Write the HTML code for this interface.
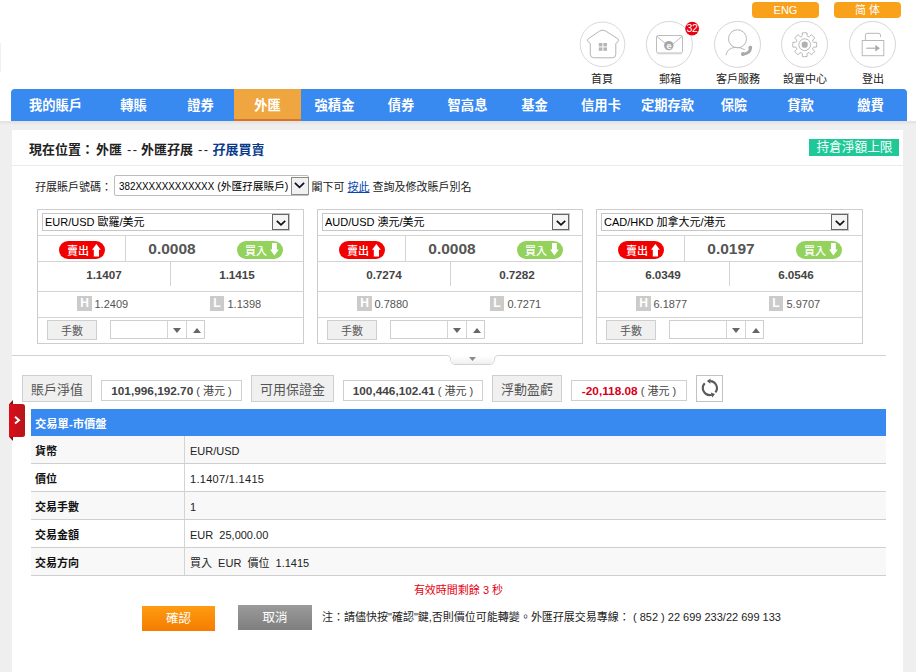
<!DOCTYPE html>
<html lang="zh-Hant">
<head>
<meta charset="utf-8">
<title>外匯孖展買賣</title>
<style>
*{box-sizing:border-box;margin:0;padding:0}
html,body{width:916px;height:672px;overflow:hidden;background:#fff}
body{position:relative;font-family:"Liberation Sans","Noto Sans CJK TC",sans-serif;font-size:12px;color:#222}
.abs{position:absolute}
.t{position:absolute;white-space:nowrap;line-height:1}
/* top */
.lang{position:absolute;top:2px;height:16px;width:67px;background:#f9a11b;border-radius:4px;color:#fff;font-size:11px;line-height:16px;text-align:center}
.ico{position:absolute;top:22px;width:46px;height:46px;border:1px solid #d2d2d2;border-radius:50%;background:#fff}
.icol{position:absolute;top:72px;width:70px;text-align:center;font-size:11px;line-height:14px;color:#222}
/* nav */
#nav{position:absolute;left:11px;top:89px;width:896px;height:32px;background:#3889f0;border-radius:4px 4px 0 0}
#nav div{position:absolute;top:0;height:32px;line-height:33px;text-align:center;color:#fff;font-weight:bold;font-size:13.3px}
#nav .act{background:#f0a640;border-bottom:2px solid #d9722a}
#gray{position:absolute;left:0;top:121px;width:916px;height:551px;background:#efefef}
#shadow{position:absolute;left:0;top:121px;width:916px;height:4px;background:linear-gradient(#e0e0e0,#efefef)}
#main{position:absolute;left:12px;top:130px;width:891px;height:542px;background:#fff}
/* panels */
.panel{position:absolute;top:209px;width:267px;height:135px;border:1px solid #cdcdcd;background:#fff}
.panel .hl{position:absolute;left:0;width:265px;height:1px;background:#d4d4d4}
.panel .vl{position:absolute;width:1px;background:#d4d4d4}
.sel{position:absolute;border:1px solid #c6c6c6;background:#fff;font-size:12px;color:#000;white-space:nowrap}
.sel .arr{position:absolute;right:0;top:0;bottom:0;width:17px;border:1px solid #666;background:#f4f4f4}
.sel .arr svg{position:absolute;left:3px;top:5px}
.tri{position:absolute;width:0;height:0;border-left:4px solid transparent;border-right:4px solid transparent}
.pill{position:absolute;height:18px;width:46px;border-radius:9px;color:#fff;font-size:11px;font-weight:500;line-height:20px;padding-left:8px;white-space:nowrap}
.pill svg{position:absolute;top:3px}
.hlbox{position:absolute;width:15px;height:15px;background:#cbcbcb;color:#fff;font-weight:bold;font-size:12px;line-height:15px;text-align:center}
.btn{position:absolute;border:1px solid #cfcfcf;background:#f0f0f0;color:#555;text-align:center;white-space:nowrap}
.vbox{position:absolute;border:1px solid #cfcfcf;background:#fff;text-align:center;white-space:nowrap;font-size:11px;color:#444}
.vbox b{color:#444;font-size:11.8px}
/* table */
.row{position:absolute;left:31px;width:855px;height:28px;border-bottom:1px solid #cfcfcf;font-size:11px;line-height:31px;overflow:hidden}
.row .k{position:absolute;left:4px;font-weight:bold;color:#111}
.row .v{position:absolute;left:159px;color:#222}
.row .d{position:absolute;left:153px;top:0;width:1px;height:27px;background:#d4d4d4}
.odd{background:#f8f8f8}
</style>
</head>
<body>
<!-- language buttons -->
<div class="lang" style="left:752px">ENG</div>
<div class="lang" style="left:834px">简 体</div>

<!-- icons -->
<svg class="abs" style="left:560px;top:0" width="356" height="90" viewBox="560 0 356 90" fill="none" stroke="#c4c4c4" stroke-width="1">
<!-- circles -->
<circle cx="602.5" cy="44.3" r="22.3" stroke="#dadade"/>
<circle cx="669.4" cy="44.4" r="23" stroke="#d6d6da"/>
<circle cx="737.5" cy="44.4" r="23" stroke="#d6d6da"/>
<circle cx="804.5" cy="44.4" r="23" stroke="#d6d6da"/>
<circle cx="872.5" cy="44.4" r="23" stroke="#d6d6da"/>
<!-- home -->
<path d="M599.6 31 Q602.6 29.2 605.6 31 L617.7 38.7 Q619.7 40.3 617.9 41.8 L615.8 43.5 L615.8 54.3 Q615.8 57.8 612.3 57.8 L593.8 57.8 Q590.3 57.8 590.3 54.3 L590.3 43.5 L588.2 41.8 Q586.4 40.3 588.4 38.7 Z" stroke="#b4b4b4" stroke-linejoin="round"/>
<g fill="#b5b5b5" stroke="none"><rect x="598.8" y="43" width="3.6" height="3.4"/><rect x="603.4" y="43" width="3.6" height="3.4"/><rect x="598.8" y="47.4" width="3.6" height="3.4"/><rect x="603.4" y="47.4" width="3.6" height="3.4"/></g>
<!-- mail -->
<rect x="656.5" y="35.5" width="26" height="17.5" rx="1.5" stroke="#bdbdbd"/>
<path d="M657 36.5 L666 44 M682 36.5 L673 44" stroke="#bdbdbd"/>
<path d="M657.5 53.8 L681.5 53.8" stroke="#d0d0d0"/>
<circle cx="668.8" cy="45.6" r="4.7" fill="#a6a6a6" stroke="none"/>
<text x="669" y="48.6" font-family="Liberation Sans, sans-serif" font-size="9" font-weight="bold" fill="#fff" stroke="none" text-anchor="middle">e</text>
<circle cx="692.1" cy="28.7" r="6.9" fill="#e8000f" stroke="none"/>
<text x="691.9" y="32.4" font-family="Liberation Sans, sans-serif" font-size="10.5" fill="#fff" stroke="none" text-anchor="middle" letter-spacing="-0.4">32</text>
<!-- customer service -->
<circle cx="737.5" cy="38.8" r="9" stroke="#b8b8b8"/>
<path d="M725.9 55.3 Q727.2 48.2 735 47.4 Q740.5 47 744.8 49.8" stroke="#b8b8b8"/>
<path d="M750.4 47.6 Q750.6 53.4 742.8 54.2" stroke="#aaa" stroke-width="3" stroke-linecap="round"/>
<circle cx="750.3" cy="47.7" r="1.9" fill="#aaa" stroke="none"/>
<circle cx="742.9" cy="54" r="1.9" fill="#aaa" stroke="none"/>
<!-- gear -->
<g stroke="#b8b8b8">
<path d="M802.26 35.72 L802.32 32.94 A12.0 12.0 0 0 1 807.08 32.94 L807.14 35.72 A1.6 1.6 0 0 0 809.32 36.63 L811.33 34.70 A12.0 12.0 0 0 1 814.70 38.07 L812.77 40.08 A1.6 1.6 0 0 0 813.68 42.26 L816.46 42.32 A12.0 12.0 0 0 1 816.46 47.08 L813.68 47.14 A1.6 1.6 0 0 0 812.77 49.32 L814.70 51.33 A12.0 12.0 0 0 1 811.33 54.70 L809.32 52.77 A1.6 1.6 0 0 0 807.14 53.68 L807.08 56.46 A12.0 12.0 0 0 1 802.32 56.46 L802.26 53.68 A1.6 1.6 0 0 0 800.08 52.77 L798.07 54.70 A12.0 12.0 0 0 1 794.70 51.33 L796.63 49.32 A1.6 1.6 0 0 0 795.72 47.14 L792.94 47.08 A12.0 12.0 0 0 1 792.94 42.32 L795.72 42.26 A1.6 1.6 0 0 0 796.63 40.08 L794.70 38.07 A12.0 12.0 0 0 1 798.07 34.70 L800.08 36.63 A1.6 1.6 0 0 0 802.26 35.72 Z" stroke-linejoin="round"/>
<circle cx="804.7" cy="44.7" r="5.9"/>
<circle cx="804.7" cy="44.7" r="3.1" fill="#b0b0b0" stroke="none"/>
</g>
<!-- logout -->
<rect x="862.2" y="40.5" width="21.6" height="15.2" stroke="#b8b8b8"/>
<path d="M865.4 40.5 L865.4 35.2 Q865.4 33.3 867.3 33.3 L878.6 33.3 Q880.5 33.3 880.5 35.2 L880.5 37" stroke="#b8b8b8"/>
<path d="M866.2 48.2 L876 48.2" stroke="#aaa" stroke-width="1.1"/>
<path d="M875.3 44.8 L879.9 48.2 L875.3 51.6 Z" fill="#aaa" stroke="none"/>
</svg>
<div class="icol" style="left:567px">首頁</div>
<div class="icol" style="left:635px">郵箱</div>
<div class="icol" style="left:703px">客戶服務</div>
<div class="icol" style="left:770px">設置中心</div>
<div class="icol" style="left:838px">登出</div>

<div class="abs" style="left:0;top:43px;width:1px;height:29px;background:#eef1f5"></div>
<div id="gray"></div>
<div id="shadow"></div>
<!-- nav -->
<div id="nav">
<div style="left:0;width:89px">我的賬戶</div>
<div style="left:89px;width:67px">轉賬</div>
<div style="left:156px;width:67px">證券</div>
<div class="act" style="left:223px;width:67px">外匯</div>
<div style="left:290px;width:67px">強積金</div>
<div style="left:357px;width:66px">債券</div>
<div style="left:423px;width:67px">智高息</div>
<div style="left:490px;width:67px">基金</div>
<div style="left:557px;width:66px">信用卡</div>
<div style="left:623px;width:67px">定期存款</div>
<div style="left:690px;width:66px">保險</div>
<div style="left:756px;width:67px">貸款</div>
<div style="left:823px;width:73px">繳費</div>
</div>

<div id="main"></div>

<!-- breadcrumb -->
<div class="t" style="left:29px;top:143px;font-size:13px;font-weight:bold;color:#222">現在位置：</div><div class="t" style="left:96px;top:143px;font-size:13px;font-weight:bold;color:#222">外匯</div><div class="t" style="left:127px;top:143px;font-size:13px;font-weight:bold;color:#222;font-weight:normal;letter-spacing:1.3px">--</div><div class="t" style="left:141px;top:143px;font-size:13px;font-weight:bold;color:#222">外匯孖展</div><div class="t" style="left:198px;top:143px;font-size:13px;font-weight:bold;color:#222;font-weight:normal;letter-spacing:1.3px">--</div><div class="t" style="left:212.5px;top:143px;font-size:13px;font-weight:bold;color:#222;color:#0a3a8c">孖展買賣</div>
<div class="abs" style="left:809px;top:139px;width:90px;height:17px;background:#1ec997;color:#fff;font-size:12.7px;line-height:17px;text-align:center;white-space:nowrap;padding-left:1px">持倉淨額上限</div>
<div class="abs" style="left:12px;top:165px;width:891px;height:1px;background:#ebebeb"></div>

<!-- account row -->
<div class="t" style="left:35px;top:182px;font-size:11px;color:#222">孖展賬戶號碼：</div>
<div class="sel" style="left:114px;top:175px;width:195px;height:21px;line-height:20px;padding-left:4px;font-size:11px;border-radius:2px;border-color:#bdbdbd"><span style="display:inline-block;transform:scaleX(0.895);transform-origin:0 50%;margin-right:-11.3px">382XXXXXXXXXXXX</span> <span style="font-size:10.7px">(外匯孖展賬戶)</span><span class="arr" style="top:1px;bottom:auto;right:-1px;width:18px;height:18px;border-color:#8a8a8a;background:#f1f1f1"><svg width="11" height="7" viewBox="0 0 11 7" style="left:2px;top:4px"><path d="M0.9 0.9 L5.5 5.3 L10.1 0.9" fill="none" stroke="#10102a" stroke-width="1.8"/></svg></span></div>
<div class="t" style="left:311.5px;top:182px;font-size:11px;color:#222">閣下可 <span style="color:#0645ad;text-decoration:underline">按此</span> 查詢及修改賬戶別名</div>

<div class="panel" style="left:37px">
<div class="sel" style="left:4px;top:3px;width:248px;height:18px;line-height:16px;padding-left:2px;font-size:11px">EUR/USD 歐羅/美元<span class="arr"><svg width="10" height="6" viewBox="0 0 10 6"><path d="M0.8 0.8 L5 4.8 L9.2 0.8" fill="none" stroke="#111" stroke-width="1.7"/></svg></span></div>
<div class="hl" style="top:25px"></div>
<div class="hl" style="top:51px"></div>
<div class="hl" style="top:81px"></div>
<div class="hl" style="top:107px"></div>
<div class="vl" style="left:87px;top:26px;height:25px"></div>
<div class="vl" style="left:132px;top:52px;height:24px"></div>
<div class="pill" style="left:21px;top:31px;background:#f20000">賣出<svg width="9" height="13" viewBox="0 0 9 13" style="left:32.8px;top:2.8px"><path d="M4.4 0 L8.8 5.8 L7 5.8 L7 12.6 L1.8 12.6 L1.8 5.8 L0 5.8 Z" fill="#fff"/></svg></div>
<div class="pill" style="left:199px;top:31px;background:#94d25e">買入<svg width="9" height="13" viewBox="0 0 9 13" style="left:32.7px;top:1.9px"><path d="M4.4 12.6 L8.8 6.6 L6.8 6.6 L6.8 0 L2 0 L2 6.6 L0 6.6 Z" fill="#fff"/></svg></div>
<div class="t" style="left:88px;width:92px;top:31px;text-align:center;font-size:15.5px;font-weight:bold;color:#555">0.0008</div>
<div class="t" style="left:0;width:132px;top:59px;text-align:center;font-size:11.7px;font-weight:bold;color:#444">1.1407</div>
<div class="t" style="left:133px;width:132px;top:59px;text-align:center;font-size:11.7px;font-weight:bold;color:#444">1.1415</div>
<div class="hlbox" style="left:39px;top:86px">H</div>
<div class="t" style="left:56.5px;top:89px;font-size:11px;color:#555">1.2409</div>
<div class="hlbox" style="left:172px;top:86px;width:14px">L</div>
<div class="t" style="left:189.5px;top:89px;font-size:11px;color:#555">1.1398</div>
<div class="btn" style="left:9px;top:110px;width:50px;height:20px;font-size:11px;line-height:21px">手數</div>
<div class="vbox" style="left:72px;top:110px;width:95px;height:19px"></div>
<div class="vl" style="left:129px;top:111px;height:17px"></div>
<div class="vl" style="left:148px;top:111px;height:17px"></div>
<div class="tri" style="left:134.5px;top:118px;border-top:5px solid #666"></div>
<div class="tri" style="left:154.5px;top:118px;border-bottom:5px solid #666"></div>
</div>
<div class="panel" style="left:317px;width:266px">
<div class="sel" style="left:4px;top:3px;width:248px;height:18px;line-height:16px;padding-left:2px;font-size:11px">AUD/USD 澳元/美元<span class="arr"><svg width="10" height="6" viewBox="0 0 10 6"><path d="M0.8 0.8 L5 4.8 L9.2 0.8" fill="none" stroke="#111" stroke-width="1.7"/></svg></span></div>
<div class="hl" style="top:25px"></div>
<div class="hl" style="top:51px"></div>
<div class="hl" style="top:81px"></div>
<div class="hl" style="top:107px"></div>
<div class="vl" style="left:87px;top:26px;height:25px"></div>
<div class="vl" style="left:132px;top:52px;height:24px"></div>
<div class="pill" style="left:21px;top:31px;background:#f20000">賣出<svg width="9" height="13" viewBox="0 0 9 13" style="left:32.8px;top:2.8px"><path d="M4.4 0 L8.8 5.8 L7 5.8 L7 12.6 L1.8 12.6 L1.8 5.8 L0 5.8 Z" fill="#fff"/></svg></div>
<div class="pill" style="left:199px;top:31px;background:#94d25e">買入<svg width="9" height="13" viewBox="0 0 9 13" style="left:32.7px;top:1.9px"><path d="M4.4 12.6 L8.8 6.6 L6.8 6.6 L6.8 0 L2 0 L2 6.6 L0 6.6 Z" fill="#fff"/></svg></div>
<div class="t" style="left:88px;width:92px;top:31px;text-align:center;font-size:15.5px;font-weight:bold;color:#555">0.0008</div>
<div class="t" style="left:0;width:132px;top:59px;text-align:center;font-size:11.7px;font-weight:bold;color:#444">0.7274</div>
<div class="t" style="left:133px;width:132px;top:59px;text-align:center;font-size:11.7px;font-weight:bold;color:#444">0.7282</div>
<div class="hlbox" style="left:39px;top:86px">H</div>
<div class="t" style="left:56.5px;top:89px;font-size:11px;color:#555">0.7880</div>
<div class="hlbox" style="left:172px;top:86px;width:14px">L</div>
<div class="t" style="left:189.5px;top:89px;font-size:11px;color:#555">0.7271</div>
<div class="btn" style="left:9px;top:110px;width:50px;height:20px;font-size:11px;line-height:21px">手數</div>
<div class="vbox" style="left:72px;top:110px;width:95px;height:19px"></div>
<div class="vl" style="left:129px;top:111px;height:17px"></div>
<div class="vl" style="left:148px;top:111px;height:17px"></div>
<div class="tri" style="left:134.5px;top:118px;border-top:5px solid #666"></div>
<div class="tri" style="left:154.5px;top:118px;border-bottom:5px solid #666"></div>
</div>
<div class="panel" style="left:596px">
<div class="sel" style="left:4px;top:3px;width:248px;height:18px;line-height:16px;padding-left:2px;font-size:11px">CAD/HKD 加拿大元/港元<span class="arr"><svg width="10" height="6" viewBox="0 0 10 6"><path d="M0.8 0.8 L5 4.8 L9.2 0.8" fill="none" stroke="#111" stroke-width="1.7"/></svg></span></div>
<div class="hl" style="top:25px"></div>
<div class="hl" style="top:51px"></div>
<div class="hl" style="top:81px"></div>
<div class="hl" style="top:107px"></div>
<div class="vl" style="left:87px;top:26px;height:25px"></div>
<div class="vl" style="left:132px;top:52px;height:24px"></div>
<div class="pill" style="left:21px;top:31px;background:#f20000">賣出<svg width="9" height="13" viewBox="0 0 9 13" style="left:32.8px;top:2.8px"><path d="M4.4 0 L8.8 5.8 L7 5.8 L7 12.6 L1.8 12.6 L1.8 5.8 L0 5.8 Z" fill="#fff"/></svg></div>
<div class="pill" style="left:199px;top:31px;background:#94d25e">買入<svg width="9" height="13" viewBox="0 0 9 13" style="left:32.7px;top:1.9px"><path d="M4.4 12.6 L8.8 6.6 L6.8 6.6 L6.8 0 L2 0 L2 6.6 L0 6.6 Z" fill="#fff"/></svg></div>
<div class="t" style="left:88px;width:92px;top:31px;text-align:center;font-size:15.5px;font-weight:bold;color:#555">0.0197</div>
<div class="t" style="left:0;width:132px;top:59px;text-align:center;font-size:11.7px;font-weight:bold;color:#444">6.0349</div>
<div class="t" style="left:133px;width:132px;top:59px;text-align:center;font-size:11.7px;font-weight:bold;color:#444">6.0546</div>
<div class="hlbox" style="left:39px;top:86px">H</div>
<div class="t" style="left:56.5px;top:89px;font-size:11px;color:#555">6.1877</div>
<div class="hlbox" style="left:172px;top:86px;width:14px">L</div>
<div class="t" style="left:189.5px;top:89px;font-size:11px;color:#555">5.9707</div>
<div class="btn" style="left:9px;top:110px;width:50px;height:20px;font-size:11px;line-height:21px">手數</div>
<div class="vbox" style="left:72px;top:110px;width:95px;height:19px"></div>
<div class="vl" style="left:129px;top:111px;height:17px"></div>
<div class="vl" style="left:148px;top:111px;height:17px"></div>
<div class="tri" style="left:134.5px;top:118px;border-top:5px solid #666"></div>
<div class="tri" style="left:154.5px;top:118px;border-bottom:5px solid #666"></div>
</div>

<!-- collapse handle -->
<svg class="abs" style="left:12px;top:350px" width="880" height="20" viewBox="12 350 880 20">
<defs><linearGradient id="hg" x1="0" y1="0" x2="0" y2="1"><stop offset="0" stop-color="#fff"/><stop offset="1" stop-color="#efefef"/></linearGradient></defs>
<path d="M12 355.5 L447.5 355.5 Q450 355.7 450.4 358 L450.8 361 Q451.5 364.5 455 364.5 L490 364.5 Q493.5 364.5 494.2 361 L494.6 358 Q495 355.7 497.5 355.5 L886 355.5" fill="none" stroke="#d2d2d2" stroke-width="1"/>
<path d="M450.9 356 L450.9 361 Q451.5 364 455 364 L490 364 Q493.5 364 494.1 361 L494.1 356 Z" fill="url(#hg)"/>
<path d="M469 357 L476 357 L472.5 361 Z" fill="#8a8a8a"/>
</svg>

<!-- summary -->
<div class="btn" style="left:22px;top:375px;width:70px;height:27px;font-size:13px;line-height:27px">賬戶淨值</div>
<div class="vbox" style="left:101px;top:380px;width:141px;height:21px;line-height:20px"><b>101,996,192.70</b> ( 港元 )</div>
<div class="btn" style="left:251px;top:375px;width:83px;height:27px;font-size:13px;line-height:27px">可用保證金</div>
<div class="vbox" style="left:343px;top:380px;width:140px;height:21px;line-height:20px"><b>100,446,102.41</b> ( 港元 )</div>
<div class="btn" style="left:492px;top:375px;width:70px;height:27px;font-size:13px;line-height:27px">浮動盈虧</div>
<div class="vbox" style="left:571px;top:380px;width:116px;height:21px;line-height:20px"><b style="color:#d8001a">-20,118.08</b> ( 港元 )</div>
<div class="vbox" style="left:696px;top:375px;width:27px;height:27px;border-color:#c2c2c2"></div>
<svg class="abs" style="left:699px;top:378px" width="21" height="21" viewBox="0 0 21 21" fill="none" stroke="#595959" stroke-width="2.1">
<path d="M16.42 14.41 A7.0 7.0 0 0 0 11.14 3.10"/>
<path d="M5.78 5.33 A7.0 7.0 0 0 0 12.83 16.83"/>
<path d="M7.85 2.99 L11.53 0.52 L11.35 5.71 Z" fill="#595959" stroke="none"/>
<path d="M16.00 15.92 L13.26 19.41 L11.82 14.41 Z" fill="#595959" stroke="none"/>
</svg>

<!-- table -->
<div class="abs" style="left:31px;top:409px;width:855px;height:27px;background:#3889f0;color:#fff;font-weight:bold;font-size:11.3px;line-height:31px;padding-left:4px;overflow:hidden">交易單-市價盤</div>
<div class="row odd" style="top:436px"><span class="k">貨幣</span><span class="d"></span><span class="v">EUR/USD</span></div>
<div class="row" style="top:464px"><span class="k">價位</span><span class="d"></span><span class="v" style="letter-spacing:0.3px">1.1407/1.1415</span></div>
<div class="row odd" style="top:492px"><span class="k">交易手數</span><span class="d"></span><span class="v">1</span></div>
<div class="row" style="top:520px"><span class="k">交易金額</span><span class="d"></span><span class="v">EUR&nbsp; 25,000.00</span></div>
<div class="row odd" style="top:548px"><span class="k">交易方向</span><span class="d"></span><span class="v">買入&nbsp; EUR&nbsp; 價位&nbsp; 1.1415</span></div>

<div class="t" style="left:31px;width:855px;text-align:center;top:585px;font-size:11px;color:#e60012">有效時間剩餘 3 秒</div>
<div class="abs" style="left:142px;top:606px;width:73px;height:25px;background:linear-gradient(#fe9c12,#f57c00);color:#fff;font-size:12.5px;line-height:26px;overflow:hidden;text-align:center">確認</div>
<div class="abs" style="left:238px;top:605px;width:74px;height:25px;background:linear-gradient(#9b9b9b,#7e7e7e);color:#fff;font-size:12.5px;line-height:27px;overflow:hidden;text-align:center">取消</div>
<div class="t" style="left:322px;top:611px;font-size:11px;color:#222">注：請儘快按"確認"鍵,否則價位可能轉變<span style="font-family:'Noto Sans CJK SC',sans-serif">。</span>外匯孖展交易專線： ( 852 ) 22 699 233/22 699 133</div>

<!-- red side tab -->
<svg class="abs" style="left:8px;top:399px" width="20" height="44" viewBox="8 399 20 44">
<defs><linearGradient id="rg" x1="0" y1="0" x2="1" y2="0"><stop offset="0" stop-color="#dc0d18"/><stop offset="1" stop-color="#b5151b"/></linearGradient></defs>
<path d="M9.3 404 L13 400 L13 404 Z" fill="#7f0c10"/>
<path d="M9.3 437 L13 441 L13 437 Z" fill="#7f0c10"/>
<path d="M9 404 L22.5 404 Q25 404 25 406.5 L25 434.5 Q25 437 22.5 437 L9 437 Z" fill="url(#rg)"/>
<path d="M15 416.8 L19 420.2 L15 423.6" fill="none" stroke="#fff" stroke-width="2"/>
</svg>

</body>
</html>
